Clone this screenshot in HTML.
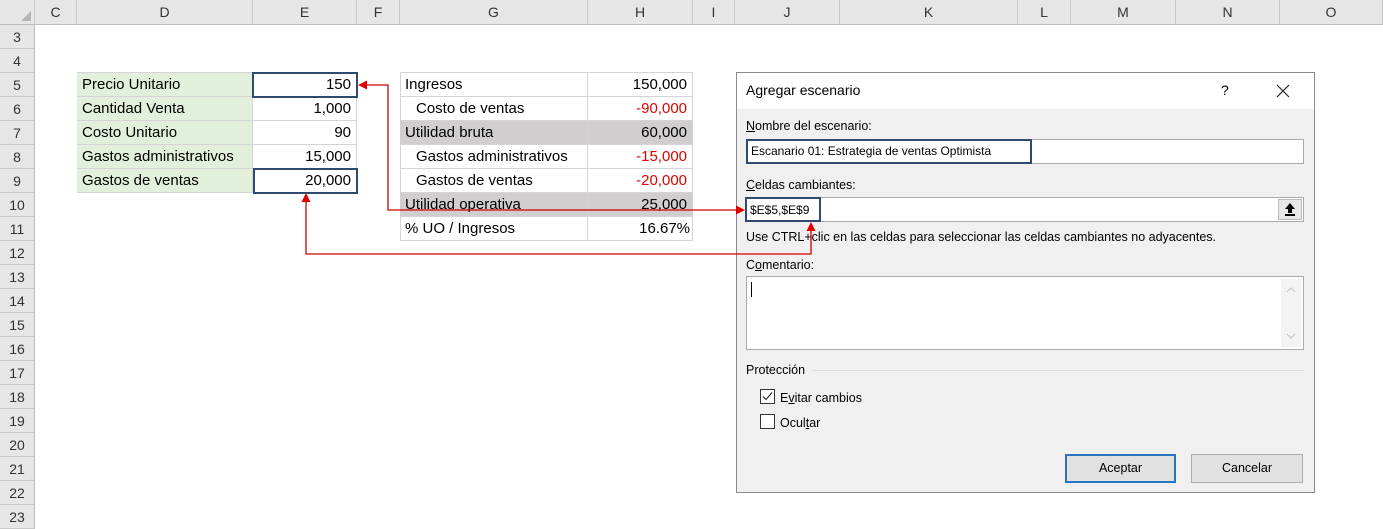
<!DOCTYPE html>
<html><head><meta charset="utf-8"><style>
*{margin:0;padding:0;box-sizing:border-box}
body{width:1383px;height:529px;overflow:hidden;background:#fff;position:relative;font-family:"Liberation Sans",Arial,sans-serif}
.a{position:absolute}
.hd{position:absolute;top:0;height:25px;background:#e6e6e6;border-right:1px solid #c8c8c8;border-bottom:1px solid #bcbcbc;font-size:14px;color:#333;text-align:center;line-height:25px}
.rh{position:absolute;left:0;width:35px;height:24px;background:#e6e6e6;border-bottom:1px solid #c8c8c8;border-right:1px solid #bcbcbc;font-size:14px;color:#333;text-align:center;line-height:24px}
.c{position:absolute;height:24px;border-right:1px solid #d4d4d4;border-bottom:1px solid #d4d4d4;font-size:15px;line-height:24px;padding:0 5px;white-space:nowrap;color:#000}
.r{text-align:right}
.red{color:#e00000}
.g{background:#e2efda}
.s{background:#d0cece}
.dl{font-size:12.5px;color:#000;position:absolute;white-space:nowrap}
</style></head><body>
<div class="hd" style="left:0;width:35px"></div>
<div class="hd" style="left:35px;width:42px">C</div>
<div class="hd" style="left:77px;width:176px">D</div>
<div class="hd" style="left:253px;width:104px">E</div>
<div class="hd" style="left:357px;width:43px">F</div>
<div class="hd" style="left:400px;width:188px">G</div>
<div class="hd" style="left:588px;width:105px">H</div>
<div class="hd" style="left:693px;width:42px">I</div>
<div class="hd" style="left:735px;width:105px">J</div>
<div class="hd" style="left:840px;width:178px">K</div>
<div class="hd" style="left:1018px;width:53px">L</div>
<div class="hd" style="left:1071px;width:105px">M</div>
<div class="hd" style="left:1176px;width:104px">N</div>
<div class="hd" style="left:1280px;width:103px">O</div>
<svg class="a" style="left:20px;top:10px" width="12" height="12"><polygon points="11,1 11,11 1,11" fill="#b5b5b5"/></svg>

<div class="rh" style="top:25px">3</div><div class="rh" style="top:49px">4</div><div class="rh" style="top:73px">5</div><div class="rh" style="top:97px">6</div><div class="rh" style="top:121px">7</div><div class="rh" style="top:145px">8</div><div class="rh" style="top:169px">9</div><div class="rh" style="top:193px">10</div><div class="rh" style="top:217px">11</div><div class="rh" style="top:241px">12</div><div class="rh" style="top:265px">13</div><div class="rh" style="top:289px">14</div><div class="rh" style="top:313px">15</div><div class="rh" style="top:337px">16</div><div class="rh" style="top:361px">17</div><div class="rh" style="top:385px">18</div><div class="rh" style="top:409px">19</div><div class="rh" style="top:433px">20</div><div class="rh" style="top:457px">21</div><div class="rh" style="top:481px">22</div><div class="rh" style="top:505px">23</div>

<!-- table 1 -->
<div class="a" style="left:77px;top:72px;width:281px;height:121px;border-top:1px solid #d4d4d4;border-left:1px solid #d4d4d4"></div>
<div class="c g" style="left:77px;top:73px;width:176px">Precio Unitario</div>
<div class="c g" style="left:77px;top:97px;width:176px">Cantidad Venta</div>
<div class="c g" style="left:77px;top:121px;width:176px">Costo Unitario</div>
<div class="c g" style="left:77px;top:145px;width:176px">Gastos administrativos</div>
<div class="c g" style="left:77px;top:169px;width:176px">Gastos de ventas</div>
<div class="c r" style="left:253px;top:73px;width:104px">150</div>
<div class="c r" style="left:253px;top:97px;width:104px">1,000</div>
<div class="c r" style="left:253px;top:121px;width:104px">90</div>
<div class="c r" style="left:253px;top:145px;width:104px">15,000</div>
<div class="c r" style="left:253px;top:169px;width:104px">20,000</div>
<div class="a" style="left:252px;top:72px;width:106px;height:26px;border:2px solid #2f4a6e"></div>
<div class="a" style="left:253px;top:168px;width:105px;height:26px;border:2px solid #2f4a6e"></div>

<!-- table 2 -->
<div class="a" style="left:400px;top:72px;width:293px;height:169px;border-top:1px solid #d4d4d4;border-left:1px solid #d4d4d4"></div>
<div class="c" style="left:400px;top:73px;width:188px">Ingresos</div>
<div class="c" style="left:400px;top:97px;width:188px;padding-left:16px">Costo de ventas</div>
<div class="c s" style="left:400px;top:121px;width:188px">Utilidad bruta</div>
<div class="c" style="left:400px;top:145px;width:188px;padding-left:16px">Gastos administrativos</div>
<div class="c" style="left:400px;top:169px;width:188px;padding-left:16px">Gastos de ventas</div>
<div class="c s" style="left:400px;top:193px;width:188px">Utilidad operativa</div>
<div class="c" style="left:400px;top:217px;width:188px">% UO / Ingresos</div>
<div class="c r" style="left:588px;top:73px;width:105px">150,000</div>
<div class="c r red" style="left:588px;top:97px;width:105px">-90,000</div>
<div class="c r s" style="left:588px;top:121px;width:105px">60,000</div>
<div class="c r red" style="left:588px;top:145px;width:105px">-15,000</div>
<div class="c r red" style="left:588px;top:169px;width:105px">-20,000</div>
<div class="c r s" style="left:588px;top:193px;width:105px">25,000</div>
<div class="c r" style="left:588px;top:217px;width:105px;padding-right:2px">16.67%</div>

<!-- dialog -->
<div class="a" style="left:736px;top:72px;width:579px;height:421px;background:#f0f0f0;border:1px solid #8a8a8a">
 <div class="a" style="left:0;top:0;width:577px;height:36px;background:#fff"></div>
</div>
<div class="dl" style="left:746px;top:82px;font-size:14px">Agregar escenario</div>
<div class="dl" style="left:1221px;top:82px;font-size:14px">?</div>
<svg class="a" style="left:1276px;top:84px" width="14" height="14"><path d="M1 1L13 13M13 1L1 13" stroke="#222" stroke-width="1.2"/></svg>
<div class="dl" style="left:746px;top:119px"><u>N</u>ombre del escenario:</div>
<div class="a" style="left:746px;top:139px;width:558px;height:25px;background:#fff;border:1px solid #aaa"></div>
<div class="a" style="left:746px;top:139px;width:286px;height:25px;border:2px solid #2f4a6e"></div>
<div class="dl" style="left:751px;top:144px;font-size:12px">Escanario 01: Estrategia de ventas Optimista</div>
<div class="dl" style="left:746px;top:178px"><u>C</u>eldas cambiantes:</div>
<div class="a" style="left:745px;top:197px;width:559px;height:25px;background:#fff;border:1px solid #aaa"></div>
<div class="a" style="left:745px;top:197px;width:76px;height:25px;border:2px solid #2f4a6e"></div>
<div class="dl" style="left:750px;top:203px;font-size:12px">$E$5,$E$9</div>
<div class="a" style="left:1278px;top:199px;width:24px;height:21px;background:#e8e8e8;border:1px solid #bbb"></div>
<svg class="a" style="left:1283px;top:201px" width="14" height="16"><path d="M7 2L2 8H5V12H9V8H12Z" fill="#000"/><rect x="2" y="13" width="10" height="2" fill="#000"/></svg>
<div class="dl" style="left:746px;top:230px">Use CTRL+clic en las celdas para seleccionar las celdas cambiantes no adyacentes.</div>
<div class="dl" style="left:746px;top:258px">C<u>o</u>mentario:</div>
<div class="a" style="left:746px;top:276px;width:558px;height:74px;background:#fff;border:1px solid #aaa"></div>
<div class="a" style="left:751px;top:282px;width:1px;height:15px;background:#000"></div>
<div class="a" style="left:1281px;top:279px;width:20px;height:68px;background:#f3f3f3"></div>
<svg class="a" style="left:1285px;top:284px" width="12" height="60"><path d="M2 8L6 4L10 8M2 50L6 54L10 50" stroke="#c0c0c0" fill="none"/></svg>
<div class="dl" style="left:746px;top:363px">Protección</div>
<div class="a" style="left:812px;top:370px;width:492px;height:1px;background:#dcdcdc"></div>
<div class="a" style="left:760px;top:389px;width:15px;height:15px;background:#fff;border:1px solid #333"></div>
<svg class="a" style="left:760px;top:389px" width="15" height="15"><path d="M3 7.5L6 10.5L12 3.5" stroke="#222" fill="none" stroke-width="1.1"/></svg>
<div class="dl" style="left:780px;top:391px">E<u>v</u>itar cambios</div>
<div class="a" style="left:760px;top:414px;width:15px;height:15px;background:#fff;border:1px solid #333"></div>
<div class="dl" style="left:780px;top:416px">Ocul<u>t</u>ar</div>
<div class="a" style="left:1065px;top:454px;width:111px;height:29px;background:#e1e1e1;border:2px solid #2a74c2"></div>
<div class="dl" style="left:1065px;top:461px;width:111px;text-align:center">Aceptar</div>
<div class="a" style="left:1191px;top:454px;width:112px;height:29px;background:#e1e1e1;border:1px solid #adadad"></div>
<div class="dl" style="left:1191px;top:461px;width:112px;text-align:center">Cancelar</div>

<!-- arrows -->
<svg class="a" style="left:0;top:0" width="1383" height="529">
 <path d="M738 210H388V85H366" stroke="#d00000" stroke-width="1.3" fill="none"/>
 <polygon points="358,85 367,80.5 367,89.5" fill="#e00000"/>
 <path d="M811 230V254H306V201" stroke="#d00000" stroke-width="1.3" fill="none"/>
 <polygon points="306,193 301.5,202 310.5,202" fill="#e00000"/>
 <polygon points="811,222 806.5,231 815.5,231" fill="#e00000"/>
 <polygon points="745,210 736,205.5 736,214.5" fill="#e00000"/>
</svg>
</body></html>
